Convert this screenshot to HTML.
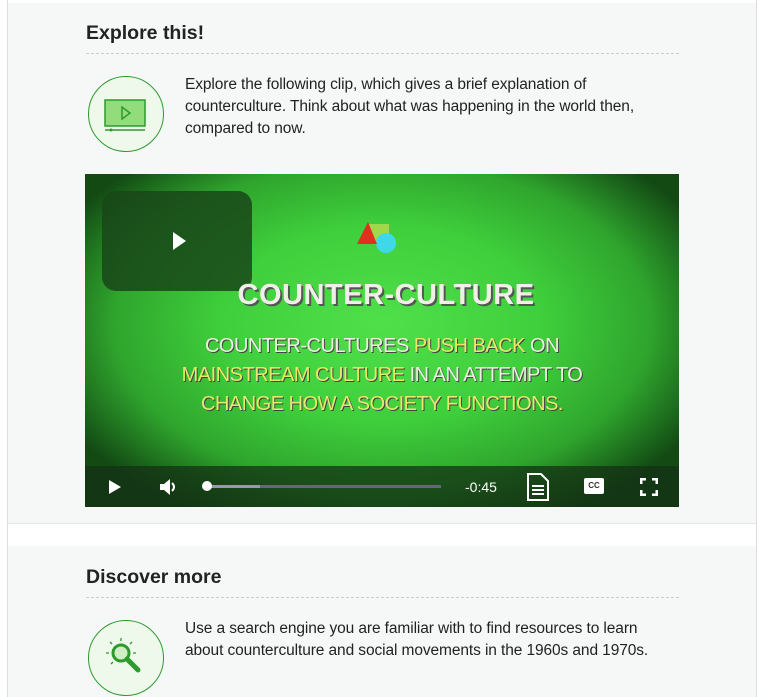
<!DOCTYPE html>
<html><head><style>
body{margin:0;background:#fff;font-family:"Liberation Sans",Arial,sans-serif;color:#222;}
.wrap{position:relative;width:769px;height:697px;overflow:hidden;}
.frame{position:absolute;left:7px;top:0;width:748px;height:697px;border-left:1px solid #ddd;border-right:1px solid #ddd;}
.sec{position:absolute;left:8px;width:748px;background:#f6f8f7;}
h2{position:absolute;left:86px;margin:0;font-size:19.5px;font-weight:bold;color:#222;}
.dash{position:absolute;left:86px;width:593px;border-top:1px dashed #ccc;}
.circ{position:absolute;left:88px;width:74px;height:74px;border:1.5px solid #2e9a2e;border-radius:50%;background:#eef9ec;}
.txt{position:absolute;left:185px;font-size:15.5px;line-height:22px;color:#222;letter-spacing:-0.1px;}
.vid{position:absolute;left:85px;top:174px;width:594px;height:333px;overflow:hidden;
background:radial-gradient(ellipse 60% 65% at 50% 45%,#4fe04a 0%,#3fcf3c 45%,#2fa52d 75%,#134a14 100%);}
.ctrl{position:absolute;left:0;bottom:0;width:100%;height:41px;background:rgba(20,50,20,.75);}
.ctrl *{position:absolute;}
</style></head><body><div class="wrap">
<div class="frame"></div>
<div class="sec" style="top:3px;height:520px;"></div>
<div class="sec" style="top:546px;height:151px;"></div>
<div style="position:absolute;left:8px;top:523px;width:748px;border-top:1px solid #e6e8e7"></div>

<h2 style="top:22px">Explore this!</h2>
<div class="dash" style="top:53px"></div>
<div class="circ" style="top:76px"></div>
<svg style="position:absolute;left:102px;top:97px" width="46" height="36" viewBox="0 0 46 36">
<rect x="3" y="3" width="40" height="26" fill="#92dc7b" stroke="#2e9a2e" stroke-width="1.5"/>
<path d="M20 10 L28 16 L20 22 Z" fill="none" stroke="#2e9a2e" stroke-width="1.5"/>
<line x1="3" y1="33" x2="43" y2="33" stroke="#2e9a2e" stroke-width="1.5"/><circle cx="9" cy="33" r="1.5" fill="#2e9a2e"/>
</svg>
<div class="txt" style="top:74px">Explore the following clip, which gives a brief explanation of<br>counterculture. Think about what was happening in the world then,<br>compared to now.</div>

<div class="vid">
<div style="position:absolute;left:17px;top:17px;width:150px;height:100px;border-radius:14px;background:rgba(25,70,25,.85)"></div>
<svg style="position:absolute;left:86px;top:57px" width="16" height="20"><path d="M2 1 L15 10 L2 19Z" fill="#fff"/></svg>
<svg style="position:absolute;left:270px;top:46px" width="50" height="40"><rect x="14" y="4" width="20" height="20" fill="#9fd84a"/><circle cx="31" cy="23" r="10" fill="#3fd8e8"/><path d="M13 2 L2 24 L22 24Z" fill="#e0301e"/></svg>
<div style="position:absolute;left:4px;width:100%;top:105px;text-align:center;font-size:29px;font-weight:bold;color:#f0f0e8;text-shadow:2px 2px 0 #555;letter-spacing:0.5px">COUNTER-CULTURE</div>
<div style="position:absolute;left:0;width:100%;top:158px;text-align:center;font-size:20px;line-height:29px;color:#eef0e0;text-shadow:1px 1px 0 #444;letter-spacing:-0.5px">COUNTER-CULTURES <span style="color:#e8e86a">PUSH BACK</span> ON<br><span style="color:#e8e86a">MAINSTREAM CULTURE</span> IN AN ATTEMPT TO<br><span style="color:#e8e86a">CHANGE HOW A SOCIETY FUNCTIONS.</span></div>
<div class="ctrl">
<svg style="left:22px;top:13px" width="16" height="16"><path d="M2 1 L14 8 L2 15Z" fill="#fff"/></svg>
<svg style="left:73px;top:11px" width="22" height="20"><path d="M2 7 H6 L12 2 V18 L6 13 H2Z" fill="#fff"/><path d="M14 6 Q18 10 14 14" stroke="#fff" stroke-width="2" fill="none"/></svg>
<div style="left:120px;top:19px;width:236px;height:3px;background:#667"></div>
<div style="left:120px;top:19px;width:55px;height:3px;background:#99a"></div>
<div style="left:117px;top:15px;width:10px;height:10px;border-radius:50%;background:#fff"></div>
<div style="left:380px;top:13px;color:#fff;font-size:14px">-0:45</div>
<svg style="left:441px;top:6px" width="24" height="30"><path d="M2 2 H15 L22 9 V28 H2Z" fill="none" stroke="#fff" stroke-width="2"/><path d="M6 14H18M6 18H18M6 22H18" stroke="#fff" stroke-width="2"/></svg>
<div style="left:499px;top:12px;width:20px;height:16px;background:#fff;border-radius:2px;font-size:8px;color:#333;text-align:center;line-height:16px;font-weight:bold">CC</div>
<svg style="left:555px;top:12px" width="18" height="18"><path d="M1 6V1H6M12 1H17V6M17 12V17H12M6 17H1V12" stroke="#fff" stroke-width="3" fill="none"/></svg>
</div>
</div>

<h2 style="top:566px">Discover more</h2>
<div class="dash" style="top:597px"></div>
<div class="circ" style="top:620px"></div>
<svg style="position:absolute;left:102px;top:634px" width="48" height="48" viewBox="0 0 48 48">
<circle cx="19" cy="19" r="8" fill="#cfeec4" stroke="#2e9a2e" stroke-width="3"/>
<path d="M25 25 L36 36" stroke="#2e9a2e" stroke-width="5" stroke-linecap="round"/>
<path d="M19 4v3M8 8l2 2M30 8l-2 2M4 19h3M34 19h-3M9 30l2-2" stroke="#2e9a2e" stroke-width="1.3"/>
</svg>
<div class="txt" style="top:618px">Use a search engine you are familiar with to find resources to learn<br>about counterculture and social movements in the 1960s and 1970s.</div>
</div></body></html>
